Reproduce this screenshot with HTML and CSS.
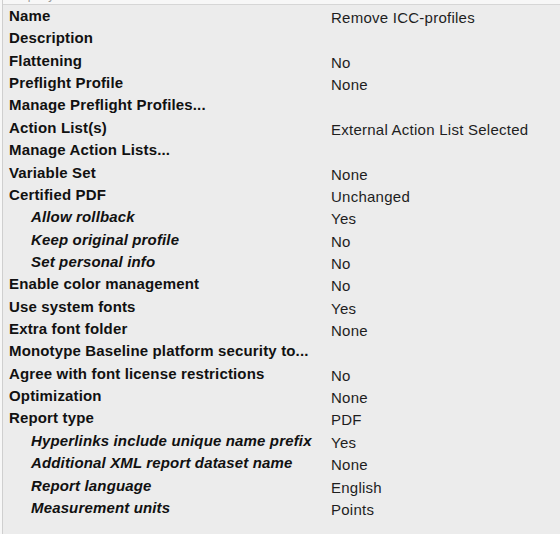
FILE: index.html
```html
<!DOCTYPE html>
<html>
<head>
<meta charset="utf-8">
<link rel="stylesheet" href="styles.css">
</head>
<body>
<div class="panel">
  <div class="header">
    <span class="hcol label">Property</span>
    <span class="hcol value">Value</span>
  </div>
  <div class="rows">
    <div class="row"><span class="label">Name</span><span class="value">Remove ICC-profiles</span></div>
    <div class="row"><span class="label">Description</span><span class="value"></span></div>
    <div class="row"><span class="label">Flattening</span><span class="value">No</span></div>
    <div class="row"><span class="label">Preflight Profile</span><span class="value">None</span></div>
    <div class="row"><span class="label">Manage Preflight Profiles...</span><span class="value"></span></div>
    <div class="row"><span class="label">Action List(s)</span><span class="value">External Action List Selected</span></div>
    <div class="row"><span class="label">Manage Action Lists...</span><span class="value"></span></div>
    <div class="row"><span class="label">Variable Set</span><span class="value">None</span></div>
    <div class="row"><span class="label">Certified PDF</span><span class="value">Unchanged</span></div>
    <div class="row sub"><span class="label">Allow rollback</span><span class="value">Yes</span></div>
    <div class="row sub"><span class="label">Keep original profile</span><span class="value">No</span></div>
    <div class="row sub"><span class="label">Set personal info</span><span class="value">No</span></div>
    <div class="row"><span class="label">Enable color management</span><span class="value">No</span></div>
    <div class="row"><span class="label">Use system fonts</span><span class="value">Yes</span></div>
    <div class="row"><span class="label">Extra font folder</span><span class="value">None</span></div>
    <div class="row"><span class="label">Monotype Baseline platform security to...</span><span class="value"></span></div>
    <div class="row"><span class="label">Agree with font license restrictions</span><span class="value">No</span></div>
    <div class="row"><span class="label">Optimization</span><span class="value">None</span></div>
    <div class="row"><span class="label">Report type</span><span class="value">PDF</span></div>
    <div class="row sub"><span class="label">Hyperlinks include unique name prefix</span><span class="value">Yes</span></div>
    <div class="row sub"><span class="label">Additional XML report dataset name</span><span class="value">None</span></div>
    <div class="row sub"><span class="label">Report language</span><span class="value">English</span></div>
    <div class="row sub"><span class="label">Measurement units</span><span class="value">Points</span></div>
  </div>
</div>
</body>
</html>
```

FILE: styles.css
```css
html, body {
  margin: 0;
  padding: 0;
  background: #f7f7f7;
  width: 560px;
  height: 534px;
  overflow: hidden;
}
.panel {
  margin-left: 2px;
  height: 534px;
  border-left: 1px solid #cfcfcf;
  background: #ececec;
  font-family: "Liberation Sans", Arial, sans-serif;
  font-size: 15px;
  color: #141414;
}
.header {
  height: 4px;
  background: #f7f7f7;
  border-bottom: 1px solid #d6d6d6;
  overflow: hidden;
  display: grid;
  grid-template-columns: 327px 1fr;
}
.hcol {
  display: block;
  margin-top: -12px;
  font-size: 12px;
  color: #999;
  font-weight: normal;
  font-style: normal;
}
.header .label { padding-left: 6px; }
.header .value { padding-left: 1px; }
.rows {
  display: flex;
  flex-direction: column;
}
.row {
  display: grid;
  grid-template-columns: 327px 1fr;
  height: 22.36px;
  line-height: 22px;
  white-space: nowrap;
}
.row .label {
  font-weight: bold;
  padding-left: 6px;
  color: #111;
  letter-spacing: 0.15px;
}
.row.sub .label {
  font-style: italic;
  padding-left: 28px;
}
.row .value {
  padding-left: 1px;
  padding-top: 2px;
  color: #1e1e1e;
  letter-spacing: 0.25px;
}
```
